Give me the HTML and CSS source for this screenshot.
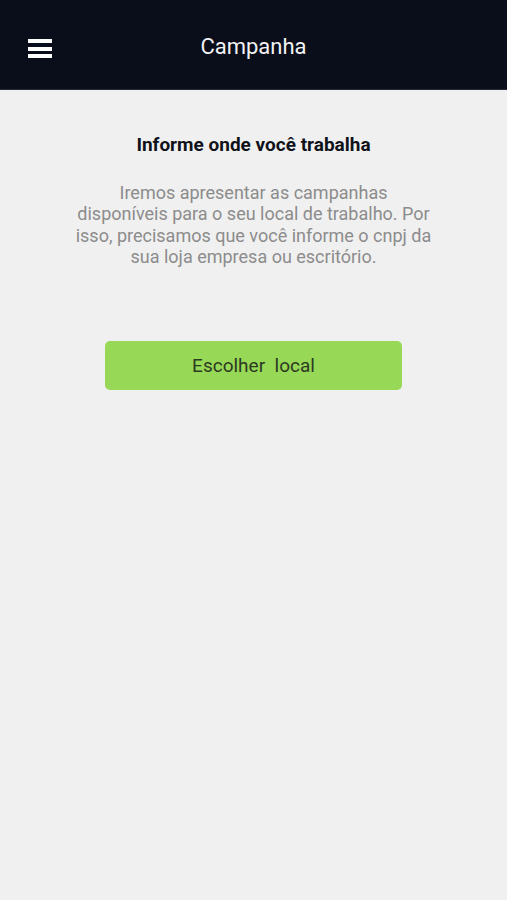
FILE: index.html
```html
<!DOCTYPE html>
<html lang="pt-BR">
<head>
    <meta charset="UTF-8">
    <meta name="viewport" content="width=device-width, initial-scale=1.0">
    <title>Campanha</title>
    <link rel="stylesheet" href="styles.css">
</head>
<body>
    <header class="topbar">
        <button class="menu-btn" aria-label="Menu">
            <span></span>
            <span></span>
            <span></span>
        </button>
        <h1 class="topbar-title">Campanha</h1>
    </header>

    <main class="content">
        <h2 class="title">Informe onde você trabalha</h2>
        <p class="info">Iremos apresentar as campanhas disponíveis para o seu local de trabalho. Por isso, precisamos que você informe o cnpj da sua loja empresa ou escritório.</p>
        <button class="choose-btn">Escolher&nbsp; local</button>
    </main>
</body>
</html>
```

FILE: styles.css
```css
body {
    margin: 0;
    background-color: #f0f0f0;
    font-family: Roboto, "Noto Sans", Arial, sans-serif;
    min-height: 900px;
}
.topbar {
    height: 90px;
    background-color: #0a0e1b;
    border-bottom: 1px solid #2a2c3a;
    box-sizing: border-box;
    display: flex;
    align-items: center;
    justify-content: center;
    position: relative;
}
.menu-btn {
    position: absolute;
    left: 28px;
    top: 39px;
    width: 24px;
    height: 19px;
    padding: 0;
    border: none;
    background: none;
    display: flex;
    flex-direction: column;
    justify-content: space-between;
    cursor: pointer;
}
.menu-btn span {
    display: block;
    height: 4px;
    background-color: #ffffff;
}
.topbar-title {
    margin: 4px 0 0;
    font-size: 22px;
    font-weight: normal;
    color: #f2f2f4;
}
.content {
    display: flex;
    flex-direction: column;
    align-items: center;
    padding-top: 44px;
}
.title {
    margin: 0;
    font-size: 19px;
    line-height: 22px;
    font-weight: bold;
    color: #10121a;
}
.info {
    width: 358px;
    margin: 26px 0 0;
    text-align: center;
    font-size: 18px;
    line-height: 21.4px;
    color: #8c8c8c;
}
.choose-btn {
    margin-top: 73px;
    width: 297px;
    height: 49px;
    border: none;
    border-radius: 5px;
    background-color: #97d857;
    color: #2c3a22;
    font-family: inherit;
    font-size: 19px;
    cursor: pointer;
}
```
